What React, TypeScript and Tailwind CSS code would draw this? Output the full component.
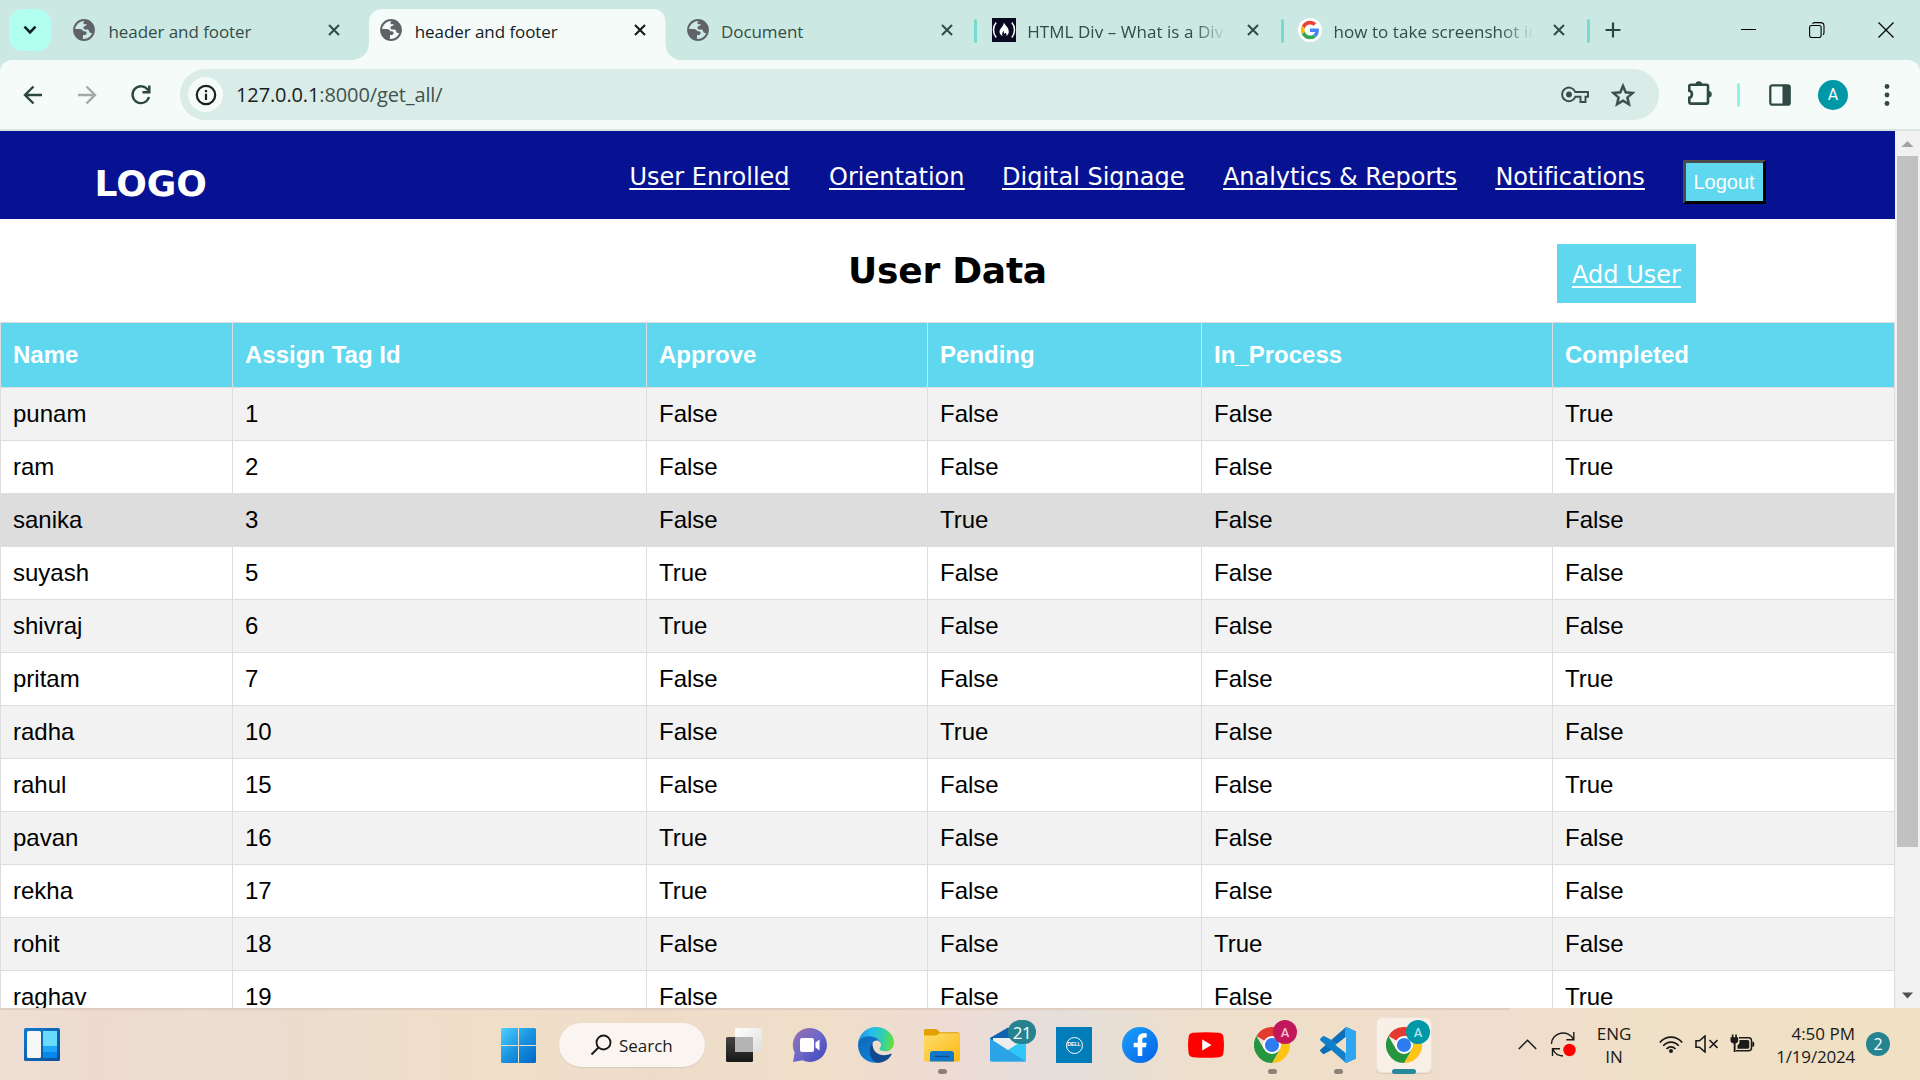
import type { ReactNode } from 'react';

const columns = ['Name', 'Assign Tag Id', 'Approve', 'Pending', 'In_Process', 'Completed'];

const users: string[][] = [
  ['punam', '1', 'False', 'False', 'False', 'True'],
  ['ram', '2', 'False', 'False', 'False', 'True'],
  ['sanika', '3', 'False', 'True', 'False', 'False'],
  ['suyash', '5', 'True', 'False', 'False', 'False'],
  ['shivraj', '6', 'True', 'False', 'False', 'False'],
  ['pritam', '7', 'False', 'False', 'False', 'True'],
  ['radha', '10', 'False', 'True', 'False', 'False'],
  ['rahul', '15', 'False', 'False', 'False', 'True'],
  ['pavan', '16', 'True', 'False', 'False', 'False'],
  ['rekha', '17', 'True', 'False', 'False', 'False'],
  ['rohit', '18', 'False', 'False', 'True', 'False'],
  ['raghav', '19', 'False', 'False', 'False', 'True'],
];

const gridCols = 'grid grid-cols-[232px_414px_281px_274px_351px_343px]';

function Globe() {
  return (
    <svg width="24" height="24" viewBox="0 0 24 24">
      <circle cx="12" cy="12" r="9.9" fill="none" stroke="#5f6368" strokeWidth="2" />
      <path d="M13 2c4 0 9 4 9 9.500c0 1.500-.3 2.500-.7 3.500h-2.300c-1.500 0-1.700-1-2-2.200c-.3-1-1.200-1.300-2.500-1.300h-1.500c-1 0-1.500-.8-1.500-1.700c0-1 .6-1.600 1.600-1.800c1-.2 1.700-.8 1.700-1.700h-1.800c-1.200 0-1.800-.8-1.500-1.800z" fill="#5f6368" />
      <path d="M2 11h5.500c2 0 3.300.8 3.700 2.200h1.500c1.300 0 2 .8 2 1.900c0 1.200-.8 1.900-2 1.900h-1.700v2.500c0 1-.5 1.500-1.300 2c-4.500-1-7.700-5-7.700-10.500z" fill="#5f6368" />
    </svg>
  );
}

function FreeCodeCamp() {
  return (
    <svg width="24" height="24" viewBox="0 0 24 24">
      <rect width="24" height="24" fill="#0a0a23" />
      <path d="M4.200 4.500C.6 8.500.6 15.500 4.200 19.500M19.800 4.500c3.600 4 3.600 11 0 15" fill="none" stroke="#fff" strokeWidth="1.500" />
      <path d="M12 4.500c.8 2.500 4.800 5 4.800 9c0 2-1 3.800-2.800 4.700c.9-1.300.7-2.800-.6-3.400c-.2.900-.8 1.200-1.300.8c-.5-.6.1-1.800-.5-2.800c-1 1.300-2.200 3.700-.9 5.300c-2-.8-3.200-2.600-3.200-4.500c0-3.200 3.900-4.600 4.500-9.100z" fill="#fff" />
    </svg>
  );
}

function Google() {
  return (
    <svg width="24" height="24" viewBox="0 0 24 24">
      <circle cx="12" cy="12" r="12" fill="#fff" />
      <g transform="translate(2.800 2.800) scale(.385)">
        <path fill="#EA4335" d="M24 9.500c3.540 0 6.710 1.220 9.210 3.600l6.850-6.850C35.900 2.380 30.470 0 24 0 14.620 0 6.510 5.380 2.560 13.220l7.980 6.190C12.430 13.720 17.740 9.500 24 9.500z" />
        <path fill="#4285F4" d="M46.980 24.550c0-1.570-.15-3.090-.38-4.550H24v9.020h12.940c-.58 2.960-2.260 5.480-4.780 7.180l7.730 6c4.510-4.180 7.090-10.360 7.090-17.650z" />
        <path fill="#FBBC05" d="M10.530 28.590c-.48-1.450-.76-2.990-.76-4.590s.27-3.140.76-4.590l-7.980-6.190C.92 16.460 0 20.120 0 24c0 3.880.92 7.540 2.560 10.780l7.970-6.190z" />
        <path fill="#34A853" d="M24 48c6.480 0 11.930-2.130 15.890-5.810l-7.730-6c-2.150 1.450-4.920 2.300-8.160 2.300-6.260 0-11.570-4.220-13.470-9.910l-7.980 6.190C6.510 42.620 14.620 48 24 48z" />
      </g>
    </svg>
  );
}

function Cross({ color }: { color: string }) {
  return (
    <svg width="12" height="12" viewBox="0 0 12 12">
      <path d="M1 1l10 10M11 1L1 11" stroke={color} strokeWidth="2.100" />
    </svg>
  );
}

function Tab({ icon, title, active, divider, fade }: { icon: ReactNode; title: string; active?: boolean; divider?: boolean; fade?: boolean }) {
  return (
    <div className="relative h-[60px] w-[306.25px] shrink-0">
      {active && (
        <svg className="absolute top-[9px] -left-[17px]" width="331" height="51" viewBox="0 0 331 51">
          <path d="M3 51C12 49 18 44 18 33V14C18 5 23 0 32 0H301C310 0 314.500 5 314.500 14V33C314.500 44 320 49 328 51Z" fill="#f5fbf9" />
        </svg>
      )}
      <div className="relative flex h-full items-center pl-[11.500px]">
        {icon}
        <div
          className={
            'ml-[11.500px] w-[202px] overflow-hidden whitespace-nowrap pt-[3px] text-[17px] leading-[24px] ' +
            (active ? 'text-[#14201e] ' : 'text-[#344d48] ') +
            (fade ? 'tracking-[0.05px] [mask-image:linear-gradient(to_right,black_166px,transparent_200px)]' : 'tracking-[-0.07px]')
          }
        >
          {title}
        </div>
        <div className="ml-[17.500px]">
          <Cross color={active ? '#101c1a' : '#344d48'} />
        </div>
      </div>
      {divider && <div className="absolute top-[19px] right-[3px] h-6 w-[3px] rounded-sm bg-[#76dccf]" />}
    </div>
  );
}

function TabStrip() {
  return (
    <div className="flex h-[60px] bg-[#cce8e2]">
      <div className="mt-[9px] ml-[9px] mr-[10.500px] flex h-[42px] w-[42px] shrink-0 items-center justify-center rounded-[14px] bg-[#b2fff2]">
        <svg width="14" height="10" viewBox="0 0 14 10">
          <path d="M1.500 1.700l5.500 5.600l5.500-5.600" fill="none" stroke="#0c201c" strokeWidth="2.600" />
        </svg>
      </div>
      <Tab icon={<div className="-ml-px mr-px"><Globe /></div>} title="header and footer" />
      <Tab icon={<Globe />} title="header and footer" active />
      <Tab icon={<Globe />} title="Document" divider />
      <Tab icon={<FreeCodeCamp />} title="HTML Div – What is a Div" divider fade />
      <Tab icon={<Google />} title="how to take screenshot in" divider fade />
      <div className="flex h-full items-center pl-[11px]">
        <svg width="18" height="18" viewBox="0 0 18 18">
          <path d="M9 1.500v15M1.500 9h15" stroke="#2c4641" strokeWidth="2.200" />
        </svg>
      </div>
      <div className="ml-auto flex h-full items-center gap-[53px] pr-[26px]">
        <svg width="16" height="16" viewBox="0 0 16 16"><path d="M1 7.500h15" stroke="#000" /></svg>
        <svg width="16" height="16" viewBox="0 0 16 16" fill="none" stroke="#000" strokeWidth="1.100">
          <rect x=".6" y="3.500" width="11.500" height="12" rx="2" />
          <path d="M3.500 1.800Q4 .6 5.500 .6H11.500Q15 .6 15 4V10.500Q15 12.200 14 12.700" />
        </svg>
        <svg width="16" height="16" viewBox="0 0 16 16"><path d="M.5.5l15 15M15.500.5l-15 15" stroke="#000" strokeWidth="1.200" /></svg>
      </div>
    </div>
  );
}

function Toolbar() {
  return (
    <div className="bg-[#cce8e2]">
      <div className="flex h-[71px] items-center rounded-t-[12px] border-b-2 border-[#d9e5e2] bg-[#f5fbf9] pl-[23px]">
        <svg width="20" height="20" viewBox="0 0 20 20" fill="none" stroke="#2c4641" strokeWidth="2.400">
          <path d="M19 10H2.500M10.500 1.500L2 10l8.500 8.500" />
        </svg>
        <svg className="ml-[34px]" width="20" height="20" viewBox="0 0 20 20" fill="none" stroke="#a1aaa7" strokeWidth="2.400">
          <path d="M1 10H17.500M9.500 1.500L18 10l-8.500 8.500" />
        </svg>
        <svg className="ml-[33px]" width="22" height="22" viewBox="0 0 22 22" fill="none" stroke="#2c4641" strokeWidth="2.400">
          <path d="M18.200 6.500A8.400 8.400 0 1 0 19 13" />
          <path d="M19.300 1.500v6.700h-6.800" />
        </svg>
        <div className="ml-[28px] flex h-[51px] w-[1479px] items-center rounded-full bg-[#daece7] pl-[8px] pr-[24px]">
          <div className="flex size-[35px] items-center justify-center rounded-full bg-[#f5fbf9]">
            <svg width="22" height="22" viewBox="0 0 22 22">
              <circle cx="11" cy="11" r="9.200" fill="none" stroke="#17211f" strokeWidth="2.200" />
              <path d="M11 9.700v6.300M11 6v2.200" stroke="#17211f" strokeWidth="2.200" />
            </svg>
          </div>
          <div className="ml-[13px] text-[20px] leading-[28px] tracking-[-0.12px] text-[#18201e]">
            127.0.0.1<span className="text-[#41524e]">:8000/get_all/</span>
          </div>
          <svg className="ml-auto" width="28" height="18" viewBox="0 0 28 18" fill="none" stroke="#3d4b48" strokeWidth="1.900">
            <path d="M14.300 6H27v4.800h-2.500V16h-5v-5.200h-5.200A6.800 6.800 0 1 1 14.300 6z" />
            <circle cx="8" cy="8.500" r="2.900" fill="#3d4b48" stroke="none" />
          </svg>
          <svg className="ml-[22px]" width="24" height="24" viewBox="0 0 24 24">
            <path d="M22 9.240l-7.190-.62L12 2 9.190 8.630 2 9.240l5.460 4.730L5.820 21 12 17.270 18.180 21l-1.630-7.030L22 9.240zM12 15.400l-3.760 2.270 1-4.280-3.320-2.880 4.380-.38L12 6.100l1.710 4.040 4.380.38-3.320 2.880 1 4.280L12 15.400z" fill="#3d4b48" stroke="#3d4b48" strokeWidth=".5" transform="translate(-2.400 -1.900) scale(1.200)" />
          </svg>
        </div>
        <svg className="mt-[-3px] ml-[28px]" width="26" height="26" viewBox="0 0 26 26">
          <path d="M4 4.800H19.500Q21 4.800 21 6.300V22Q21 23.600 19.500 23.600H4Q2.300 23.600 2.300 22V17.800C5.800 17 5.800 11.500 2.300 10.800V6.300Q2.300 4.800 4 4.800Z" fill="none" stroke="#2f4a45" strokeWidth="2.600" />
          <path d="M8.500 4.500a3.300 3.300 0 0 1 6.600 0zM21.500 11a3.200 3.200 0 0 1 0 6.500z" fill="#2f4a45" />
        </svg>
        <div className="ml-[24px] h-6 w-[3px] rounded-sm bg-[#8ff3e6]" />
        <svg className="ml-[29px]" width="22" height="22" viewBox="0 0 22 22">
          <rect x="1.300" y="1.300" width="19.400" height="19.400" rx="2" fill="none" stroke="#2f4a45" strokeWidth="2.300" />
          <path d="M13.500 1h6q1.500 0 1.500 1.500v17q0 1.500-1.500 1.500h-6z" fill="#2f4a45" />
        </svg>
        <div className="ml-[27px] flex size-[30px] items-center justify-center rounded-full bg-[#0097a7] font-['Roboto',sans-serif] text-[16px] leading-none text-white">A</div>
        <svg className="ml-[36px]" width="6" height="24" viewBox="0 0 6 24" fill="#2f4a45">
          <circle cx="3" cy="3.500" r="2.400" />
          <circle cx="3" cy="12" r="2.400" />
          <circle cx="3" cy="20.500" r="2.400" />
        </svg>
      </div>
    </div>
  );
}

function SiteHeader() {
  return (
    <div className="flex h-[88px] items-start bg-[#061291] pl-[94.500px] font-['DejaVu_Sans',Verdana,sans-serif] text-white">
      <div className="mt-[32px] w-[534.500px] text-[36px] leading-[42px] font-bold">LOGO</div>
      <div className="mt-[32px] flex text-[24px] leading-[28px] underline decoration-2 underline-offset-[3px] [text-decoration-skip-ink:none]">
        <a className="w-[200px] pl-[0.500px]">User Enrolled</a>
        <a className="w-[173px]">Orientation</a>
        <a className="w-[221px]">Digital Signage</a>
        <a className="w-[272.500px] tracking-[-0.05px]">Analytics &amp; Reports</a>
        <a className="w-[187.500px] tracking-[-0.08px]">Notifications</a>
      </div>
      <button className="mt-[29px] h-[44px] w-[83px] border-[3px] border-t-[#4c4c4c] border-l-[#4c4c4c] border-r-black border-b-black bg-[#5fd7ef] pr-px pb-px font-['Liberation_Sans',Arial,sans-serif] text-[20px] leading-none">
        Logout
      </button>
    </div>
  );
}

function UserTable() {
  return (
    <div className="w-[1895px] border-r border-[#ddd] font-['Liberation_Sans',Arial,sans-serif] text-[24px] text-black">
      <div className={gridCols + ' h-[65px] border-t border-[#ddd] bg-[#5fd7ef] font-bold text-white'}>
        {columns.map((c) => (
          <div key={c} className="border-l border-[#ddd] pt-[18px] pl-[12px] leading-[28px]">{c}</div>
        ))}
      </div>
      {users.map((u, i) => (
        <div
          key={u[0]}
          className={gridCols + ' h-[53px] border-t border-[#ddd] ' + (i === 2 ? 'bg-[#ddd]' : i % 2 === 0 ? 'bg-[#f2f2f2]' : 'bg-white')}
        >
          {u.map((v, j) => (
            <div key={j} className="border-l border-[#ddd] pt-[12px] pl-[12px] leading-[28px]">{v}</div>
          ))}
        </div>
      ))}
    </div>
  );
}

function Page() {
  return (
    <div className="flex h-[877px] overflow-hidden bg-white">
      <div className="h-full w-[1895px] overflow-hidden">
        <SiteHeader />
        <div className="relative flex h-[103px] justify-center font-['DejaVu_Sans',Verdana,sans-serif]">
          <h2 className="mt-[31px] text-[36px] leading-[42px] font-bold tracking-[-0.250px] text-black">User Data</h2>
          <a className="absolute top-[25px] left-[1557px] flex h-[59px] w-[139px] items-center justify-center bg-[#5fd7ef] pt-[2px] text-[24px] leading-[28px] text-white underline decoration-2 underline-offset-[3px]">
            Add User
          </a>
        </div>
        <UserTable />
      </div>
      <div className="flex w-[25px] flex-col items-center bg-[#f1f1f1]">
        <svg width="25" height="25" viewBox="0 0 25 25"><path d="M6.500 16l6-6l6 6z" fill="#a3a3a3" /></svg>
        <div className="h-[691px] w-[21px] bg-[#c1c1c1]" />
        <svg className="mt-auto" width="25" height="25" viewBox="0 0 25 25"><path d="M7 9.500h11l-5.500 6z" fill="#505050" /></svg>
      </div>
    </div>
  );
}

function Slot({ children, mark }: { children: ReactNode; mark?: boolean }) {
  return (
    <div className="relative flex h-[72px] w-[66px] shrink-0 items-center justify-center pt-[2px]">
      {children}
      {mark && <div className="absolute top-[61px] left-[29px] h-[5px] w-[9px] rounded-full bg-[#8b8177]" />}
    </div>
  );
}

function Chrome() {
  return (
    <svg width="36" height="36" viewBox="0 0 36 36">
      <path d="M18 18L2.400 9A18 18 0 0 1 33.600 9H18z" fill="#e33b2e" />
      <path d="M18 18L33.600 9A18 18 0 0 1 18 36L25.800 22.500z" fill="#fcc417" />
      <path d="M18 18L10.200 22.500L2.400 9A18 18 0 0 0 18 36L25.800 22.500z" fill="#25963f" />
      <circle cx="18" cy="18" r="9" fill="#fff" />
      <circle cx="18" cy="18" r="7.100" fill="#2f7bf0" />
    </svg>
  );
}

function Taskbar() {
  return (
    <div className="relative flex h-[72px] bg-[linear-gradient(to_right,#eeded3_0px,#eddbd2_90px,#ecdcce_300px,#efdfc8_490px,#eedcc9_650px,#efdfc9_820px,#eedbd4_950px,#e4dedb_1060px,#eedfcc_1200px,#efdfc9_1330px,#efddce_1480px,#efe0c8_1640px,#f0e1c3_1920px)] text-[17px] text-[#1b1a19]">
      <div className="absolute top-0 left-0 h-[2px] w-[1509px] bg-[#dfcebf]" />
      <div className="flex w-[485px] items-center pt-px pl-[24px]">
        <svg width="36" height="33" viewBox="0 0 36 33">
          <defs>
            <linearGradient id="wid" x1="0" y1="0" x2="1" y2="1"><stop offset="0" stopColor="#0f7bd0" /><stop offset="1" stopColor="#0c4f97" /></linearGradient>
          </defs>
          <rect width="36" height="33" rx="1.500" fill="url(#wid)" />
          <rect x="3" y="3" width="14" height="27" rx="1.500" fill="#f6f6f6" />
          <path d="M19 3h14v15h-14z" fill="#68d9ff" />
          <path d="M19 18h14v6h-14z" fill="#1fa5f8" />
          <path d="M19 24h14v6h-14z" fill="#0687ec" />
        </svg>
      </div>
      <Slot>
        <svg width="35" height="35" viewBox="0 0 35 35">
          <defs>
            <linearGradient id="win" x1="0" y1="0" x2="1" y2="1"><stop offset="0" stopColor="#4fd0ff" /><stop offset=".5" stopColor="#1a94e2" /><stop offset="1" stopColor="#0067c6" /></linearGradient>
          </defs>
          <path d="M1.500 0H17v17H0V1.500Q0 0 1.500 0zM18 0h15.500Q35 0 35 1.500V17H18zM0 18h17v17H1.500Q0 35 0 33.500zM18 18h17v15.500q0 1.500-1.500 1.500H18z" fill="url(#win)" />
        </svg>
      </Slot>
      <div className="mt-[15px] ml-[8px] mr-[6px] flex h-[44px] w-[146px] shrink-0 items-center rounded-full bg-[#faf5f0] pl-[31px] shadow-[0_1px_1px_#d9cbbd]">
        <svg width="22" height="22" viewBox="0 0 22 22" fill="none" stroke="#1b1a19" strokeWidth="1.900">
          <circle cx="13.500" cy="8.500" r="7" />
          <path d="M8.500 13.500L1.500 20.500" />
        </svg>
        <span className="ml-[7px] pt-px tracking-[-0.02px] leading-[24px]">Search</span>
      </div>
      <Slot>
        <svg width="36" height="34" viewBox="0 0 36 34">
          <defs>
            <linearGradient id="tv1" x1="0" y1="0" x2="0" y2="1"><stop offset="0" stopColor="#444" /><stop offset="1" stopColor="#181818" /></linearGradient>
            <linearGradient id="tv2" x1="0" y1="0" x2="1" y2="1"><stop offset="0" stopColor="#fff" /><stop offset="1" stopColor="#dedede" /></linearGradient>
          </defs>
          <rect y="9" width="27" height="25" rx="1.500" fill="url(#tv1)" />
          <rect x="9" width="27" height="24" rx="1.500" fill="url(#tv2)" />
          <path d="M9 9h18v15H10.500Q9 24 9 22.500z" fill="#b4b4b4" />
        </svg>
      </Slot>
      <Slot>
        <svg width="36" height="36" viewBox="0 0 36 36">
          <defs>
            <linearGradient id="chat" x1="0" y1="0" x2="1" y2="1"><stop offset="0" stopColor="#9a6fae" /><stop offset=".5" stopColor="#6d68c9" /><stop offset=".75" stopColor="#5254c4" /><stop offset="1" stopColor="#4a4fc0" /></linearGradient>
          </defs>
          <path d="M18 1A17 17 0 1 1 10.500 33.300L1 35l1.700-9.200A17 17 0 0 1 18 1z" fill="url(#chat)" />
          <rect x="8" y="11" width="14" height="14" rx="2" fill="#fff" />
          <path d="M23.500 15.500l4-3v11l-4-3z" fill="#fff" />
        </svg>
      </Slot>
      <Slot>
        <svg width="36" height="36" viewBox="0 0 36 36">
          <defs>
            <linearGradient id="edgeA" x1="0" y1=".3" x2="1" y2=".4"><stop offset="0" stopColor="#1c8fdc" /><stop offset=".35" stopColor="#25bdf0" /><stop offset=".7" stopColor="#32cfa8" /><stop offset="1" stopColor="#66e03c" /></linearGradient>
            <linearGradient id="edgeB" x1="0" y1="0" x2=".6" y2="1"><stop offset="0" stopColor="#1267b4" /><stop offset="1" stopColor="#0b82dd" /></linearGradient>
          </defs>
          <path d="M0 18C0 8 8 0 18 0s18 7.200 18 15.500c0 5.500-4 8.800-8.500 8.800c-4 0-6-1.300-6-2.500c0-1 1.500-1.700 1.500-4.300c0-3-2.800-7-8.500-7C6 10.500 0 14.500 0 18z" fill="url(#edgeA)" />
          <path d="M0 18C.3 13 4.500 9.200 10.500 9.200c8 0 12.500 4.300 12.500 8.300c0-2.300-2-4-4.300-4c-3.200 0-5.700 3.200-5.700 8.500c0 7.500 5 13.500 10 12.900C12 38.500 0 31 0 18z" fill="url(#edgeB)" />
          <path d="M14.500 15.700C10 20 11 35.500 20.500 35.800c6 0 10.500-3.800 13-8c.5-.8-.2-1.500-1-1c-8 3.800-18.500 .2-18-11.100z" fill="#124a90" />
        </svg>
      </Slot>
      <Slot mark>
        <svg width="36" height="33" viewBox="0 0 36 33">
          <defs>
            <linearGradient id="fold" x1="0" y1="0" x2="1" y2="1"><stop offset="0" stopColor="#ffdc6e" /><stop offset="1" stopColor="#fbb90f" /></linearGradient>
          </defs>
          <path d="M0 1.500Q0 0 1.500 0h10q1 0 1.800.8L16 3.300h18q1.500 0 1.500 1.500V8H0z" fill="#e0a000" />
          <path d="M0 6.500h11.500q1.200 0 2-.8L15.300 4.200H34.500q1.500 0 1.500 1.500V31q0 1.500-1.500 1.500h-33Q0 32.500 0 31z" fill="url(#fold)" />
          <path d="M6 32.500V25q0-3 3-3h18q3 0 3 3v7.500z" fill="#1078c8" />
          <path d="M11.500 27.500h13" stroke="#0a4f98" strokeWidth="1.500" strokeLinecap="round" />
        </svg>
      </Slot>
      <Slot>
        <svg width="36" height="36" viewBox="0 0 36 36">
          <path d="M0 11L18 .5L36 11v22H0z" fill="#0f62b0" />
          <path d="M3 11h30v12H3z" fill="#eeeeee" />
          <path d="M36 11.500v21.500q0 1.500-1.500 1.500H0L18 23z" fill="#30c6f5" />
          <path d="M0 11.500L36 34.500H1.500Q0 34.500 0 33z" fill="#2aa4e6" />
        </svg>
        <div className="absolute top-[12px] left-[33px] flex h-6 w-7 items-center justify-center rounded-full bg-[#26828e] tracking-[-0.5px] leading-none text-white">21</div>
      </Slot>
      <Slot>
        <div className="flex size-9 items-center justify-center bg-[#027db9]">
          <div className="flex size-[17px] items-center justify-center rounded-full border border-white font-['Liberation_Sans',sans-serif] text-[5.500px] leading-none font-bold tracking-[-0.2px] text-white">DELL</div>
        </div>
      </Slot>
      <Slot>
        <svg width="36" height="36" viewBox="0 0 36 36">
          <defs>
            <linearGradient id="fb" x1="0" y1="0" x2="1" y2="1"><stop offset="0" stopColor="#1aa2fb" /><stop offset="1" stopColor="#0560e6" /></linearGradient>
          </defs>
          <circle cx="18" cy="18" r="18" fill="url(#fb)" />
          <path d="M15.700 29V20.300h-4v-4.500h4v-3.300c0-4 2.400-6.200 6-6.200c1.200 0 2.300.1 3 .2v4.100h-1.900c-2 0-2.500 1-2.500 2.300v2.900h4.300l-.7 4.500h-3.600V29z" fill="#fff" />
        </svg>
      </Slot>
      <Slot>
        <svg width="36" height="26" viewBox="0 0 36 26">
          <path d="M5 .8Q18-.5 31 .8Q35 1.200 35.400 5Q36.500 13 35.400 21Q35 24.800 31 25.200Q18 26.500 5 25.200Q1 24.800.6 21Q-.5 13 .6 5Q1 1.200 5 .8z" fill="#f00" />
          <path d="M14.200 7.500v11l9.300-5.500z" fill="#fff" />
        </svg>
      </Slot>
      <Slot mark>
        <Chrome />
        <div className="absolute top-[12px] left-[34px] flex size-6 items-center justify-center rounded-full bg-[#c2185b] font-['Roboto',sans-serif] text-[13px] leading-none font-medium text-[#efc3d5]">A</div>
      </Slot>
      <Slot mark>
        <svg width="36" height="36" viewBox="0 0 36 36">
          <path d="M26 0L36 4.500V10L4.500 26.700Q3.500 27.400 2.500 26.500L.5 24.500Q-.4 23.500.5 22.600z" fill="#0a6fb8" />
          <path d="M26 36L36 31.500V26L4.500 9.300Q3.500 8.600 2.500 9.500L.5 11.500Q-.4 12.500.5 13.400z" fill="#1180c8" />
          <path d="M26.500 36Q25.500 36 25 35V1Q25.500 0 26.500 0L34.500 3.700Q36 4.400 36 6V30Q36 31.600 34.500 32.300z" fill="#2fa6f2" />
          <path d="M26 9.800v16.400L15.300 18z" fill="#efdfc9" />
        </svg>
      </Slot>
      <div className="relative -ml-[2px] flex h-[72px] w-[66px] shrink-0 items-center justify-center pt-[2px]">
        <div className="absolute top-[9px] left-[7px] h-[56px] w-[56px] rounded-[6px] border border-[#eee2d6] bg-[#f8efe7] shadow-[0_1px_1px_#d9cbbd]" />
        <div className="relative ml-[4px]"><Chrome /></div>
        <div className="absolute top-[12px] left-[37px] flex size-6 items-center justify-center rounded-full bg-[#0097a7] font-['Roboto',sans-serif] text-[13px] leading-none font-medium text-[#b5e0e5]">A</div>
        <div className="absolute top-[61px] left-[23px] h-[5px] w-6 rounded-full bg-[#26889a]" />
      </div>
      <div className="ml-auto flex h-full items-center pr-[30px]">
        <svg width="19" height="11" viewBox="0 0 19 11"><path d="M.8 10L9.500 1.300L18.200 10" fill="none" stroke="#1b1a19" strokeWidth="1.500" /></svg>
        <svg className="ml-[13px]" width="26" height="26" viewBox="0 0 26 26" fill="none" stroke="#1b1a19" strokeWidth="1.400">
          <path d="M1.500 13A11.500 11 0 0 1 23.500 8.500M23.800 1v7.800h-7.500M2.500 25v-7.300h7.500M2.800 18A11.500 11 0 0 0 13 25" />
          <circle cx="19.500" cy="19" r="6.200" fill="#f00" stroke="none" />
        </svg>
        <div className="ml-[19px] w-[38px] pt-px text-center leading-[23px] tracking-[-0.1px]">ENG<br />IN</div>
        <svg className="ml-[26px]" width="24" height="19" viewBox="0 0 24 19" fill="none" stroke="#1b1a19" strokeWidth="1.700">
          <path d="M.8 7.500C7 .3 17 .3 23.200 7.500M4.200 10.800c4.500-5 11.100-5 15.600 0M7.500 14c2.600-2.900 6.400-2.900 9 0" />
          <circle cx="12" cy="16" r="2" fill="#1b1a19" stroke="none" />
        </svg>
        <svg className="ml-[12px]" width="23" height="18" viewBox="0 0 23 18" fill="none" stroke="#1b1a19" strokeWidth="1.600">
          <path d="M1 5.800h3.500L10 1v16l-5.500-4.800H1zM14.500 5l8 8M22.500 5l-8 8" />
        </svg>
        <svg className="ml-[12px]" width="25" height="20" viewBox="0 0 25 20">
          <path d="M9 3.800h9.500q3 0 3 3v7q0 3-3 3H6" fill="none" stroke="#1b1a19" strokeWidth="1.500" />
          <path d="M9.500 6h8.300q1.500 0 1.500 1.500v5.700q0 1.500-1.500 1.500H7.500v-3.500q2-1 2-3z" fill="#1b1a19" />
          <path d="M22.300 7.500q2 0 2 2v1.500q0 2-2 2z" fill="#1b1a19" />
          <path d="M.5 3.300h1.300V.5h1.700v2.800h1.700V.5h1.700v2.800h1.300v3.200q0 2.300-2.600 3v8.500H3.700V9.500Q.5 8.800.5 6.500z" fill="#1b1a19" />
        </svg>
        <div className="ml-[20px] w-[80px] pt-px text-right leading-[23px] whitespace-nowrap">4:50 PM<br /><span className="tracking-[-0.2px]">1/19/2024</span></div>
        <div className="ml-[11px] flex size-6 items-center justify-center rounded-full bg-[#268491] text-[16px] leading-none text-white">2</div>
      </div>
    </div>
  );
}

export default function App() {
  return (
    <div className="h-[1080px] w-[1920px] overflow-hidden font-['Open_Sans','Noto_Sans',sans-serif]">
      <TabStrip />
      <Toolbar />
      <Page />
      <Taskbar />
    </div>
  );
}
